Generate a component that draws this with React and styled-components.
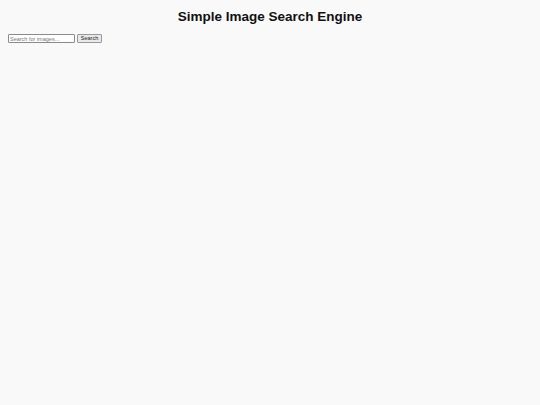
import React, { useState } from 'react';
import styled, { createGlobalStyle } from 'styled-components';

const GlobalStyle = createGlobalStyle`
  body {
    margin: 8px;
    background: #f9f9f9;
    font-family: "Liberation Sans", Arial, sans-serif;
  }
`;

const Title = styled.h1`
  text-align: center;
  font-size: 13.5px;
  font-weight: bold;
  color: #111;
  margin: 0 0 9px;
  line-height: 17px;
`;

const SearchForm = styled.form`
  display: flex;
  align-items: center;
  gap: 2px;
`;

const SearchInput = styled.input`
  width: 67px;
  height: 9px;
  box-sizing: border-box;
  padding: 0 1px;
  font-size: 5.5px;
  font-family: "Liberation Sans", Arial, sans-serif;
  border: 1px solid #8a8a8a;
  border-radius: 1px;
  background: #fff;
  &::placeholder {
    color: #777;
  }
`;

const SearchButton = styled.button`
  width: 25px;
  height: 9px;
  box-sizing: border-box;
  padding: 0;
  font-size: 5.5px;
  font-family: "Liberation Sans", Arial, sans-serif;
  border: 1px solid #999;
  border-radius: 1px;
  background: #e9e9e9;
  color: #222;
  line-height: 1;
`;

export default function App() {
  const [query, setQuery] = useState('');
  return (
    <>
      <GlobalStyle />
      <Title>Simple Image Search Engine</Title>
      <SearchForm onSubmit={(e) => e.preventDefault()}>
        <SearchInput
          type="text"
          value={query}
          onChange={(e) => setQuery(e.target.value)}
          placeholder="Search for images..."
        />
        <SearchButton type="submit">Search</SearchButton>
      </SearchForm>
    </>
  );
}
